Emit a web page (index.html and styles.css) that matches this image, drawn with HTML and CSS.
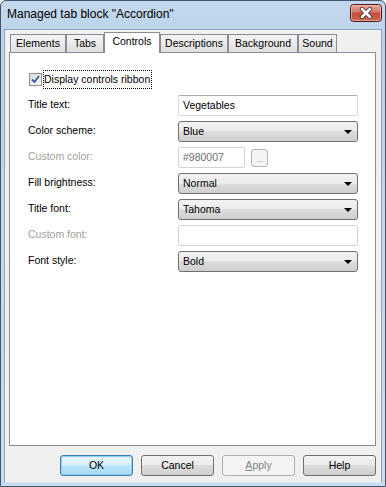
FILE: index.html
```html
<!DOCTYPE html>
<html>
<head>
    <title>Managed tab block</title>
    <link rel="stylesheet" href="styles.css">
</head>
<body>
<div class="window">
    <div class="titlebar">
        <span class="title">Managed tab block "Accordion"</span>
        <span class="close">
            <svg width="32" height="18" viewBox="0 0 32 18">
                <defs>
                    <linearGradient id="red" x1="0" y1="0" x2="0" y2="1">
                        <stop offset="0" stop-color="#e9a99a"/>
                        <stop offset="0.45" stop-color="#d0776a"/>
                        <stop offset="0.5" stop-color="#c24a3c"/>
                        <stop offset="1" stop-color="#d06a52"/>
                    </linearGradient>
                </defs>
                <rect x="0.5" y="0.5" width="31" height="17" rx="3" fill="url(#red)" stroke="#4e1a1a"/>
                <rect x="1.5" y="1.5" width="29" height="15" rx="2" fill="none" stroke="#f0c4b8" stroke-opacity="0.6"/>
                <path d="M12 5 L20 13 M20 5 L12 13" stroke="#4a3434" stroke-width="4.4" stroke-linecap="round"/>
                <path d="M12 5 L20 13 M20 5 L12 13" stroke="#ffffff" stroke-width="2.6" stroke-linecap="round"/>
            </svg>
        </span>
    </div>
    <div class="client">
        <div class="tabs">
            <div class="tab w-elements">Elements</div>
            <div class="tab w-tabs">Tabs</div>
            <div class="tab active w-controls">Controls</div>
            <div class="tab w-desc">Descriptions</div>
            <div class="tab w-back">Background</div>
            <div class="tab w-sound">Sound</div>
        </div>
        <div class="panel">
            <div class="check-row">
                <span class="checkbox">
                    <svg width="9" height="9" viewBox="0 0 9 9"><path d="M1 4.5 L3.5 7 L8 1" fill="none" stroke="#3d5a9a" stroke-width="1.8"/></svg>
                </span>
                <span class="focus">Display controls ribbon</span>
            </div>
            <div class="form">
                <span class="label">Title text:</span>
                <div class="textbox">Vegetables</div>

                <span class="label">Color scheme:</span>
                <div class="combo">Blue<span class="arrow"></span></div>

                <span class="label disabled">Custom color:</span>
                <div class="color-row">
                    <div class="textbox off small">#980007</div>
                    <span class="dots">...</span>
                </div>

                <span class="label">Fill brightness:</span>
                <div class="combo">Normal<span class="arrow"></span></div>

                <span class="label">Title font:</span>
                <div class="combo">Tahoma<span class="arrow"></span></div>

                <span class="label disabled">Custom font:</span>
                <div class="textbox off"></div>

                <span class="label">Font style:</span>
                <div class="combo">Bold<span class="arrow"></span></div>
            </div>
        </div>
        <div class="buttons">
            <span class="btn default">OK</span>
            <span class="btn">Cancel</span>
            <span class="btn off"><u>A</u>pply</span>
            <span class="btn">Help</span>
        </div>
    </div>
</div>
</body>
</html>
```

FILE: styles.css
```css
body {
    margin: 0;
    font-family: "Liberation Sans", Arial, sans-serif;
    font-size: 10.5px;
    color: #000;
}

.window {
    width: 386px;
    height: 487px;
    box-sizing: border-box;
    border: 1px solid #44556a;
    border-radius: 6px 6px 0 0;
    background: linear-gradient(#c3d8ee, #bcd3eb 40px, #c8dcf0);
    padding: 0 3px 3px 3px;
    display: flex;
    flex-direction: column;
}

.titlebar {
    height: 28px;
    display: flex;
    justify-content: space-between;
    align-items: flex-start;
    padding-left: 3px;
}

.title {
    font-size: 12px;
    margin-top: 6px;
    color: #000;
}

.close {
    margin-top: 3px;
    height: 18px;
}

.close svg {
    display: block;
}

.client {
    flex: 1;
    background: #f0f0f0;
    border: 1px solid #8ea3bd;
    border-bottom-color: #dfe8f2;
    padding: 2px 5px 6px 4px;
    display: flex;
    flex-direction: column;
}

.tabs {
    display: flex;
    align-items: flex-end;
    height: 21px;
    margin-left: 1px;
    margin-bottom: -1px;
}

.tab {
    box-sizing: border-box;
    height: 18px;
    margin-bottom: 1px;
    border: 1px solid #898c95;
    border-bottom: none;
    background: linear-gradient(#f3f3f3, #ebebeb 50%, #dedede);
    text-align: center;
    line-height: 17px;
}

.tab.active {
    height: 21px;
    margin-bottom: 0;
    background: #fff;
    position: relative;
    z-index: 2;
    line-height: 17px;
}

.w-elements { width: 56px; }
.w-tabs { width: 38px; }
.w-controls { width: 56px; }
.w-desc { width: 68px; }
.w-back { width: 70px; }
.w-sound { width: 39px; }

.panel {
    flex: 1;
    background: #fff;
    border: 1px solid #898c95;
    padding: 17px 0 0 18px;
    position: relative;
    z-index: 1;
}

.check-row {
    display: flex;
    align-items: center;
    height: 19px;
}

.checkbox {
    box-sizing: border-box;
    width: 13px;
    height: 13px;
    margin-left: 1px;
    margin-right: 1px;
    border: 1px solid #8e8f8f;
    background: linear-gradient(135deg, #dcdcdc, #f4f4f4);
    display: flex;
    align-items: center;
    justify-content: center;
}

.checkbox svg {
    display: block;
}

.focus {
    border: 1px dotted #000;
    height: 17px;
    line-height: 17px;
    padding: 0 1px 0 0;
}

.form {
    margin-top: 6px;
    display: grid;
    grid-template-columns: 150px 180px;
    grid-auto-rows: 21px;
    row-gap: 5px;
}

.label {
    line-height: 18px;
}

.label.disabled {
    color: #a0a0a0;
}

.textbox {
    box-sizing: border-box;
    height: 21px;
    border: 1px solid #d6dbe1;
    border-top-color: #abadb3;
    border-radius: 2px;
    background: #fff;
    padding-left: 4px;
    line-height: 19px;
}

.textbox.off {
    border-color: #d3d3d3;
    color: #6d6d6d;
}

.textbox.small {
    width: 67px;
}

.color-row {
    display: flex;
    align-items: center;
    gap: 6px;
}

.dots {
    box-sizing: border-box;
    width: 17px;
    height: 18px;
    border: 1px solid #b5b5b5;
    border-radius: 3px;
    background: #f4f4f4;
    color: #9a9a9a;
    font-size: 9px;
    text-align: center;
    line-height: 18px;
}

.combo {
    box-sizing: border-box;
    height: 21px;
    border: 1px solid #707070;
    border-radius: 3px;
    background: linear-gradient(#f2f2f2, #ebebeb 50%, #dddddd 50%, #cfcfcf);
    padding-left: 4px;
    line-height: 19px;
    position: relative;
}

.arrow {
    position: absolute;
    right: 5px;
    top: 8px;
    width: 0;
    height: 0;
    border-left: 4px solid transparent;
    border-right: 4px solid transparent;
    border-top: 4px solid #000;
}

.buttons {
    display: flex;
    justify-content: flex-end;
    gap: 8px;
    margin-top: 9px;
}

.btn {
    box-sizing: border-box;
    width: 73px;
    height: 21px;
    border: 1px solid #707070;
    border-radius: 3px;
    background: linear-gradient(#f2f2f2, #ebebeb 50%, #dddddd 50%, #cfcfcf);
    text-align: center;
    line-height: 19px;
}

.btn.default {
    border-color: #3c7fb1;
    background: linear-gradient(#eaf6fd, #d9f0fc 50%, #bee6fd 50%, #a7d9f5);
    box-shadow: inset 0 0 0 1px #8ed1f5;
}

.btn.off {
    border-color: #adb2b5;
    background: #f4f4f4;
    color: #838383;
}
```
